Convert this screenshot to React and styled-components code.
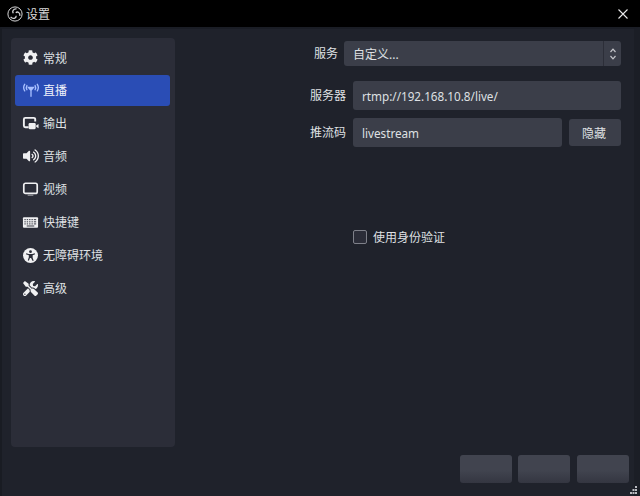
import React from 'react';
import styled, { createGlobalStyle } from 'styled-components';
import { FaCog, FaVolumeUp, FaTools } from 'react-icons/fa';

const GlobalStyle = createGlobalStyle`
    html, body {
        margin: 0;
        padding: 0;
        background: #1f222b;
    }
    * {
        box-sizing: border-box;
    }
`;

const fontStack = `"Noto Sans", "Noto Sans CJK SC", sans-serif`;

const AntennaIcon = () => (
    <svg width="16" height="16" viewBox="0 0 18 18" fill="none" stroke="#a9c0ff" strokeWidth="1.500" strokeLinecap="round">
        <path d="M9 7v9M6.200 6.200L9 9.500l2.800-3.300H6.200z" />
        <path d="M4.400 4c-.9 1.500-.9 3.200 0 4.700M13.600 4c.9 1.500.9 3.200 0 4.700" />
        <path d="M1.900 2.600c-1.500 2.400-1.500 5 0 7.400M16.100 2.600c1.500 2.400 1.500 5 0 7.400" />
    </svg>
);

const OutputIcon = () => (
    <svg width="17" height="17" viewBox="0 0 18 18" fill="none">
        <path d="M7 13H3.500A1.500 1.500 0 0 1 2 11.500V4.500A1.500 1.500 0 0 1 3.500 3h9A1.500 1.500 0 0 1 14 4.500V7" stroke="#f0f0f2" strokeWidth="2" />
        <rect x="7" y="8.500" width="7.500" height="6.500" rx="1.200" fill="#f0f0f2" />
        <path d="M15 11l2.500-1.600v4.700L15 12.500z" fill="#f0f0f2" />
    </svg>
);

const MonitorIcon = () => (
    <svg width="17" height="17" viewBox="0 0 18 18" fill="none">
        <rect x="1.900" y="2.400" width="14.200" height="10.700" rx="1.800" stroke="#f0f0f2" strokeWidth="1.800" />
        <path d="M6 15h6" stroke="#8d8e94" strokeWidth="1.500" />
    </svg>
);

const KeyboardIcon = () => (
    <svg width="17" height="17" viewBox="0 0 18 18">
        <rect x="1" y="3.500" width="16" height="11" rx="1" fill="#f0f0f2" />
        <path d="M2.500 6h1.500M5 6h1.500M7.500 6H9M10 6h1.500M12.500 6h2.500M2.500 8.300h1.500M5 8.300h1.500M7.500 8.300H9M10 8.300h1.500M12.500 8.300h2.500M2.500 10.500h1.500M5 10.500h1.500M7.500 10.500H9M10 10.500h1.500M12.500 10.500h2.500M5 12.700h8" stroke="#2b2d38" strokeWidth="1" />
    </svg>
);

const AccessIcon = () => (
    <svg width="15" height="15" viewBox="0 0 16 16">
        <circle cx="8" cy="8" r="8" fill="#f0f0f2" />
        <circle cx="8" cy="3.900" r="1.500" fill="#2b2d38" />
        <path d="M3.500 5.600L6 6.500h4l2.500-.9.400 1.100-2.600 1.100v2.500l1.100 3.300-1.100.4L8.600 10.600H7.400l-1.200 2.900-1.100-.4 1.100-3.300V7.800L3.100 6.700z" fill="#2b2d38" />
    </svg>
);

const ObsLogo = () => (
    <svg width="16" height="16" viewBox="0 0 16 16" fill="none" stroke="#d4d4d6">
        <circle cx="8" cy="8" r="7.100" strokeWidth="1" />
        <path d="M9.500 2.900C6.300 2.600 4.700 5.500 6.400 7.300M12.800 9.800C13.500 6.600 10.400 5 8.800 6.800M3.600 10.900C5.800 13.400 9.300 12.400 9.200 9.800" strokeWidth="1.300" />
    </svg>
);

const CloseIcon = () => (
    <svg width="12" height="12" viewBox="0 0 12 12" stroke="#e8e8ea" strokeWidth="1.100">
        <path d="M1.500 1.500l9 9M10.500 1.500l-9 9" />
    </svg>
);

const Chevrons = () => (
    <svg width="8" height="14" viewBox="0 0 8 14" fill="none" stroke="#c4c5ca" strokeWidth="1.200">
        <path d="M1.500 5L4 2.200 6.500 5M1.500 9L4 11.800 6.500 9" />
    </svg>
);

const ResizeGrip = () => (
    <svg width="8" height="10" viewBox="0 0 8 10" fill="#b9bac0">
        <rect x="5" y="0" width="2" height="2" />
        <rect x="2.500" y="3" width="2" height="2" />
        <rect x="5" y="3" width="2" height="2" />
        <rect x="0" y="6" width="2" height="2" />
        <rect x="2.500" y="6" width="2" height="2" />
        <rect x="5" y="6" width="2" height="2" />
    </svg>
);

const menu = [
    { label: '常规', icon: <FaCog size={15} color="#f0f0f2" /> },
    { label: '直播', icon: <AntennaIcon />, active: true },
    { label: '输出', icon: <OutputIcon /> },
    { label: '音频', icon: <FaVolumeUp size={16} color="#f0f0f2" /> },
    { label: '视频', icon: <MonitorIcon /> },
    { label: '快捷键', icon: <KeyboardIcon /> },
    { label: '无障碍环境', icon: <AccessIcon /> },
    { label: '高级', icon: <FaTools size={15} color="#f0f0f2" /> },
];

const App = () => {
    return (
        <>
            <GlobalStyle />
            <Window>
                <TitleBar>
                    <TitleLeft>
                        <ObsLogo />
                        <span>设置</span>
                    </TitleLeft>
                    <CloseIcon />
                </TitleBar>
                <Frame>
                    <Body>
                        <Sidebar>
                            {menu.map((item) => (
                                <MenuItem key={item.label} $active={item.active}>
                                    <IconSlot>{item.icon}</IconSlot>
                                    {item.label}
                                </MenuItem>
                            ))}
                        </Sidebar>
                        <Content>
                            <FieldRow $labelWidth={163} $gap={6}>
                                <FieldLabel>服务</FieldLabel>
                                <Combo>
                                    <ComboText>自定义...</ComboText>
                                    <ComboArrow><Chevrons /></ComboArrow>
                                </Combo>
                            </FieldRow>
                            <FieldRow $labelWidth={171} $gap={7} $top={15}>
                                <FieldLabel>服务器</FieldLabel>
                                <TextInput>rtmp://192.168.10.8/live/</TextInput>
                            </FieldRow>
                            <FieldRow $labelWidth={171} $gap={7} $top={8}>
                                <FieldLabel>推流码</FieldLabel>
                                <TextInput>livestream</TextInput>
                                <SideButton>隐藏</SideButton>
                            </FieldRow>
                            <CheckRow>
                                <CheckBox />
                                使用身份验证
                            </CheckRow>
                        </Content>
                    </Body>
                    <Footer>
                        <FooterButton />
                        <FooterButton />
                        <FooterButton />
                    </Footer>
                    <GripSpot><ResizeGrip /></GripSpot>
                </Frame>
            </Window>
        </>
    );
};
export default App;

const Window = styled.div`
    width: 640px;
    height: 496px;
    display: flex;
    flex-direction: column;
    overflow: hidden;
    background: #1f222b;
    color: #dfe0e3;
    font-family: ${fontStack};
    font-size: 12px;
`;

const TitleBar = styled.div`
    height: 27px;
    flex: none;
    display: flex;
    align-items: center;
    justify-content: space-between;
    padding: 0 11px 0 7px;
    background: #000;
    color: #d8d8da;
`;

const TitleLeft = styled.div`
    display: flex;
    align-items: center;
    gap: 3px;
`;

const Frame = styled.div`
    position: relative;
    flex: 1;
    display: flex;
    flex-direction: column;
    border-left: 2px solid #191c23;
    border-right: 6px solid #1b1e26;
    border-top: 2px solid #1a1d25;
`;

const GripSpot = styled.span`
    position: absolute;
    right: -4px;
    bottom: 0;
    display: flex;
`;

const Body = styled.div`
    flex: none;
    height: 418px;
    display: flex;
    padding: 9px 0 0 9px;
`;

const Sidebar = styled.div`
    width: 164px;
    height: 409px;
    flex: none;
    padding: 4px 5px 0 4px;
    border-radius: 4px;
    background: #2b2d38;
`;

const MenuItem = styled.div`
    height: 31px;
    margin-bottom: 2px;
    display: flex;
    align-items: center;
    padding: 0 0 1px 7px;
    border-radius: 3px;
    background: ${({ $active }) => ($active ? '#2a4db5' : 'transparent')};
    color: ${({ $active }) => ($active ? '#f2f4fb' : '#dfe0e3')};

    &:first-child {
        padding-bottom: 0;
    }
`;

const IconSlot = styled.span`
    width: 17px;
    flex: none;
    display: flex;
    align-items: center;
    justify-content: center;
    margin-right: 4px;
`;

const Content = styled.div`
    flex: 1;
    padding: 3px 13px 0 0;
    min-width: 0;
`;

const FieldRow = styled.div`
    display: flex;
    align-items: center;
    gap: 7px;
    margin-top: ${({ $top }) => $top || 0}px;

    > :first-child {
        width: ${({ $labelWidth }) => $labelWidth}px;
        margin-right: ${({ $gap }) => $gap - 7}px;
    }
`;

const FieldLabel = styled.label`
    flex: none;
    padding-bottom: 2px;
    text-align: right;
    color: #dfe0e3;
`;

const Combo = styled.div`
    flex: 1;
    height: 25px;
    display: flex;
    align-items: center;
    border-radius: 3px;
    background: #3b3e49;
`;

const ComboText = styled.span`
    flex: 1;
    padding-left: 9px;
    color: #dfe0e3;
`;

const ComboArrow = styled.span`
    width: 18px;
    height: 100%;
    display: flex;
    align-items: center;
    justify-content: center;
    border-left: 1px solid #2c2e38;
`;

const TextInput = styled.div`
    flex: 1;
    height: 29px;
    display: flex;
    align-items: center;
    padding-left: 9px;
    border-radius: 3px;
    background: #3b3e49;
    color: #dfe0e3;
    font-size: 11.7px;
`;

const SideButton = styled.button`
    width: 52px;
    height: 27px;
    flex: none;
    padding: 0 2px 0 0;
    border: 0;
    border-radius: 3px;
    background: #3b3e49;
    color: #dfe0e3;
    font-family: inherit;
    font-size: 12px;
`;

const CheckRow = styled.div`
    display: flex;
    align-items: center;
    gap: 6px;
    margin: 81px 0 0 178px;
    color: #dfe0e3;
`;

const CheckBox = styled.span`
    width: 14px;
    height: 14px;
    border: 1px solid #7e8089;
    border-radius: 2px;
    background: #2b2d38;
`;

const Footer = styled.div`
    flex: 1;
    display: flex;
    justify-content: flex-end;
    gap: 6px;
    padding: 8px 5px 0 0;
`;

const FooterButton = styled.div`
    width: 52px;
    height: 28px;
    border-radius: 3px;
    background: linear-gradient(#41444f 55%, #343641);

    &:last-child {
        margin-left: 1px;
    }
`;
